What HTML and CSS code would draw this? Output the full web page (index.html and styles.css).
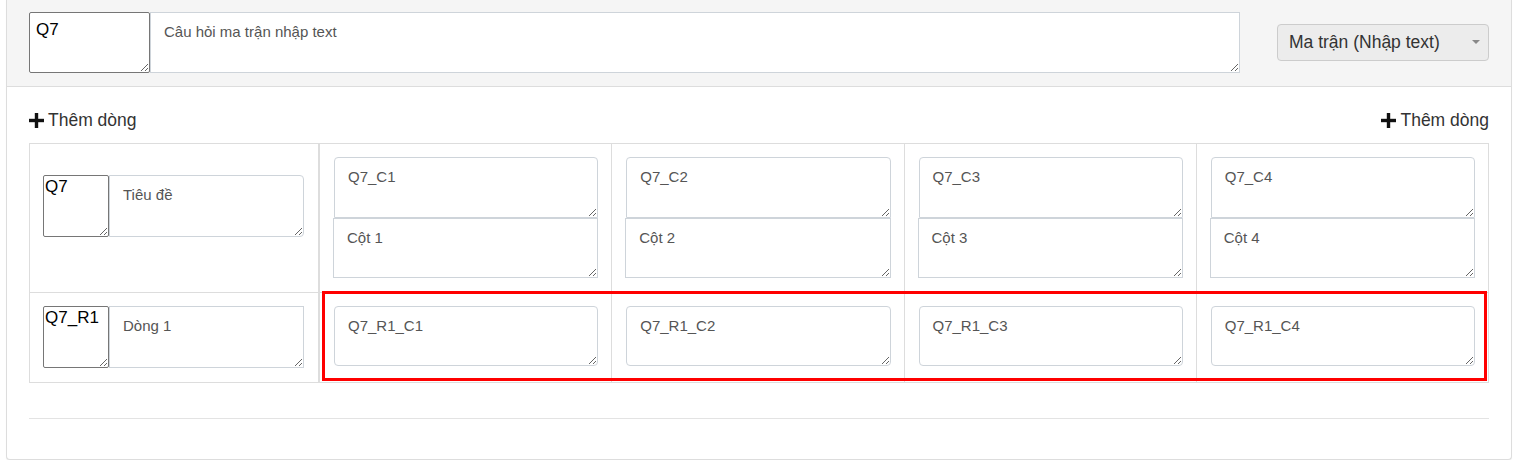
FILE: index.html
```html
<!DOCTYPE html>
<html lang="vi">
<head>
<meta charset="utf-8">
<title>Câu hỏi ma trận</title>
<link rel="stylesheet" href="styles.css">
</head>
<body>
<div class="page">
  <div class="card">
    <div class="card-head">
      <div class="title-group">
        <textarea class="code code-lg">Q7</textarea>
        <textarea class="field field-title">Câu hỏi ma trận nhập text</textarea>
      </div>
      <div class="type-select">
        <span class="type-label">Ma trận (Nhập text)</span>
        <span class="caret"></span>
      </div>
    </div>
    <div class="card-body">
      <div class="actions">
        <button class="add" type="button"><svg class="plus" viewBox="0 0 15 15" width="15" height="15"><rect x="0" y="5.8" width="15" height="3.4"/><rect x="5.8" y="0" width="3.4" height="15"/></svg>Thêm dòng</button>
        <button class="add" type="button"><svg class="plus" viewBox="0 0 15 15" width="15" height="15"><rect x="0" y="5.8" width="15" height="3.4"/><rect x="5.8" y="0" width="3.4" height="15"/></svg>Thêm dòng</button>
      </div>
      <div class="matrix">
        <div class="cell label-cell r1 c1">
          <div class="pair">
            <textarea class="code">Q7</textarea>
            <textarea class="field field-side rounded-right">Tiêu đề</textarea>
          </div>
        </div>
        <div class="cell r1 c2"><textarea class="field col-code">Q7_C1</textarea><textarea class="field col-name">Cột 1</textarea></div>
        <div class="cell r1 c3"><textarea class="field col-code">Q7_C2</textarea><textarea class="field col-name">Cột 2</textarea></div>
        <div class="cell r1 c4"><textarea class="field col-code">Q7_C3</textarea><textarea class="field col-name">Cột 3</textarea></div>
        <div class="cell r1 c5"><textarea class="field col-code">Q7_C4</textarea><textarea class="field col-name">Cột 4</textarea></div>

        <div class="cell label-cell r2 c1">
          <div class="pair">
            <textarea class="code">Q7_R1</textarea>
            <textarea class="field field-side">Dòng 1</textarea>
          </div>
        </div>
        <div class="cell r2 c2"><textarea class="field answer">Q7_R1_C1</textarea></div>
        <div class="cell r2 c3"><textarea class="field answer">Q7_R1_C2</textarea></div>
        <div class="cell r2 c4"><textarea class="field answer">Q7_R1_C3</textarea></div>
        <div class="cell r2 c5"><textarea class="field answer">Q7_R1_C4</textarea></div>
        <div class="highlight"></div>
      </div>
      <hr class="divider">
    </div>
  </div>
</div>
</body>
</html>
```

FILE: styles.css
```css
* { box-sizing: border-box; }

html, body {
  margin: 0;
  background: #ffffff;
}

body {
  font-family: "Liberation Sans", Arial, sans-serif;
  color: #333333;
}

.page {
  padding: 0 7px 0 6px;
}

.card {
  border: 1px solid #dddddd;
  border-top: none;
  border-radius: 0 0 4px 4px;
  background: #ffffff;
  box-shadow: 0 1px 1px rgba(0, 0, 0, 0.06);
}

.card-head {
  display: flex;
  align-items: center;
  gap: 37px;
  padding: 12px 22px 13px 22px;
  background: #f5f5f5;
  border-bottom: 1px solid #dddddd;
}

.title-group {
  flex: 1;
  display: flex;
  height: 61px;
}

textarea {
  margin: 0;
  display: block;
  font-family: "Liberation Sans", Arial, sans-serif;
  background: #ffffff;
}

.code {
  width: 66px;
  height: 62px;
  padding: 1px;
  font-size: 17px;
  color: #000000;
  border: 1px solid #767676;
  border-radius: 2px;
  line-height: 19px;
}

.code-lg {
  width: 121px;
  height: 61px;
  padding: 7px 6px;
}

.field {
  font-size: 15px;
  line-height: 20px;
  color: #555555;
  border: 1px solid #ced4da;
  padding: 9px 13px;
}

.field-title {
  flex: 1;
  height: 61px;
  border-radius: 0;
}

.type-select {
  width: 212px;
  height: 37px;
  display: flex;
  align-items: center;
  padding: 0 8px 0 11px;
  background: #ececec;
  border: 1px solid #cccccc;
  border-radius: 4px;
  font-size: 17.5px;
  color: #333333;
}

.type-label {
  flex: 1;
}

.caret {
  width: 0;
  height: 0;
  margin-top: -1px;
  border-left: 4px solid transparent;
  border-right: 4px solid transparent;
  border-top: 4px solid #888888;
}

.card-body {
  padding: 21px 22px 0 22px;
}

.actions {
  display: flex;
  justify-content: space-between;
  margin-bottom: 11px;
}

.add {
  display: flex;
  align-items: center;
  gap: 4px;
  height: 24px;
  padding: 0;
  border: none;
  background: none;
  font-family: "Liberation Sans", Arial, sans-serif;
  font-size: 17.5px;
  line-height: 24px;
  color: #333333;
}

.plus {
  fill: #111111;
  flex: none;
}

.matrix {
  display: grid;
  grid-template-columns: 290px repeat(4, 1fr);
  grid-template-rows: 149px 90px;
  border-top: 1px solid #dddddd;
  border-left: 1px solid #dddddd;
}

.r1 { grid-row: 1; }
.r2 { grid-row: 2; }
.c1 { grid-column: 1; }
.c2 { grid-column: 2; }
.c3 { grid-column: 3; }
.c4 { grid-column: 4; }
.c5 { grid-column: 5; }

.cell {
  border-right: 1px solid #dddddd;
  border-bottom: 1px solid #dddddd;
  padding: 13px 13px 0 13px;
}

.label-cell {
  border-right: 2px solid #dddddd;
  padding-right: 14px;
}

.label-cell.r1 {
  padding-top: 31px;
}

.pair {
  display: flex;
  height: 62px;
}

.field-side {
  flex: 1;
  height: 62px;
  border-radius: 0;
}

.rounded-right {
  border-radius: 0 4px 4px 0;
}

.col-code {
  width: calc(100% - 1px);
  margin-left: 1px;
  height: 61px;
  border-radius: 4px 4px 0 0;
}

.col-name {
  width: 100%;
  height: 60px;
  border-radius: 0;
}

.answer {
  width: calc(100% - 1px);
  margin-left: 1px;
  height: 60px;
  border-radius: 4px;
}

.highlight {
  grid-row: 2;
  grid-column: 2 / 6;
  margin: -2px 2px 2px 2px;
  border: 3px solid #ff0000;
  pointer-events: none;
  z-index: 1;
}

.divider {
  margin: 35px 0 40px;
  border: none;
  border-top: 1px solid #e3e3e3;
  height: 0;
}
```
